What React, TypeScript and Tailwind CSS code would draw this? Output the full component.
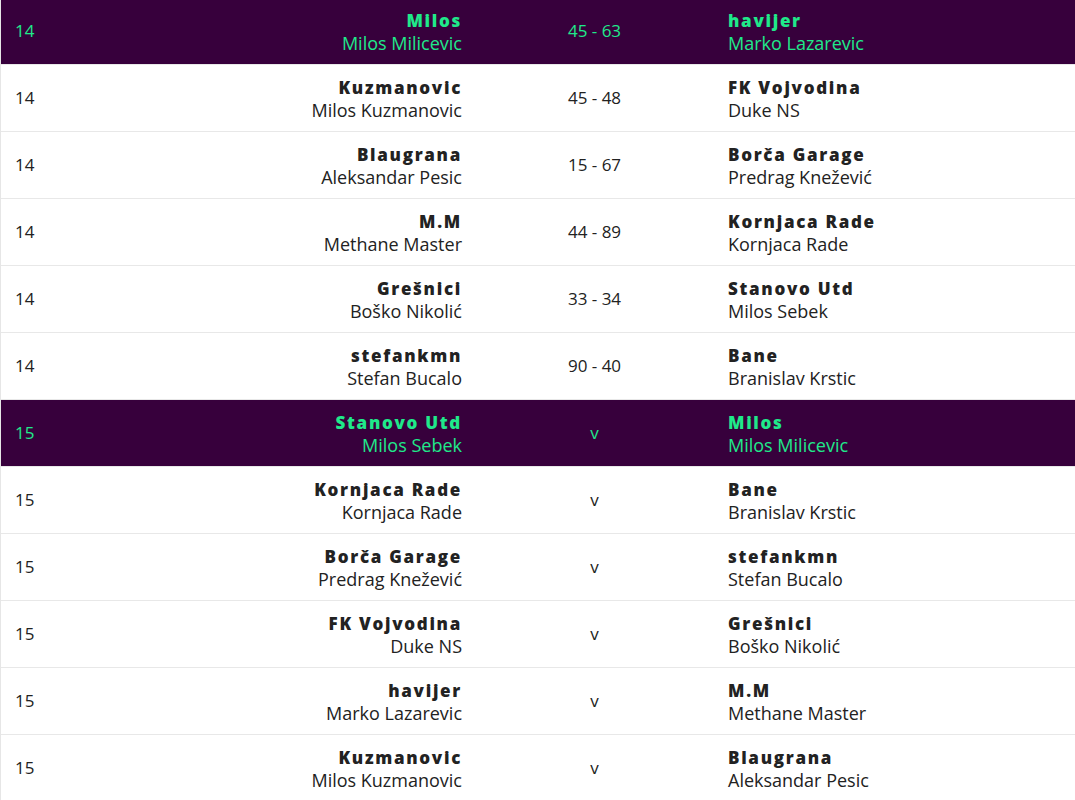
import React from 'react';

type Fixture = {
  gw: number;
  home: string;
  homeManager: string;
  away: string;
  awayManager: string;
  score?: string;
  highlight?: boolean;
};

const fixtures: Fixture[] = [
  { gw: 14, home: 'Milos', homeManager: 'Milos Milicevic', away: 'havijer', awayManager: 'Marko Lazarevic', score: '45 - 63', highlight: true },
  { gw: 14, home: 'Kuzmanovic', homeManager: 'Milos Kuzmanovic', away: 'FK Vojvodina', awayManager: 'Duke NS', score: '45 - 48' },
  { gw: 14, home: 'Blaugrana', homeManager: 'Aleksandar Pesic', away: 'Borča Garage', awayManager: 'Predrag Knežević', score: '15 - 67' },
  { gw: 14, home: 'M.M', homeManager: 'Methane Master', away: 'Kornjaca Rade', awayManager: 'Kornjaca Rade', score: '44 - 89' },
  { gw: 14, home: 'Grešnici', homeManager: 'Boško Nikolić', away: 'Stanovo Utd', awayManager: 'Milos Sebek', score: '33 - 34' },
  { gw: 14, home: 'stefankmn', homeManager: 'Stefan Bucalo', away: 'Bane', awayManager: 'Branislav Krstic', score: '90 - 40' },
  { gw: 15, home: 'Stanovo Utd', homeManager: 'Milos Sebek', away: 'Milos', awayManager: 'Milos Milicevic', highlight: true },
  { gw: 15, home: 'Kornjaca Rade', homeManager: 'Kornjaca Rade', away: 'Bane', awayManager: 'Branislav Krstic' },
  { gw: 15, home: 'Borča Garage', homeManager: 'Predrag Knežević', away: 'stefankmn', awayManager: 'Stefan Bucalo' },
  { gw: 15, home: 'FK Vojvodina', homeManager: 'Duke NS', away: 'Grešnici', awayManager: 'Boško Nikolić' },
  { gw: 15, home: 'havijer', homeManager: 'Marko Lazarevic', away: 'M.M', awayManager: 'Methane Master' },
  { gw: 15, home: 'Kuzmanovic', homeManager: 'Milos Kuzmanovic', away: 'Blaugrana', awayManager: 'Aleksandar Pesic' },
];

function Team({ name, manager, align }: { name: string; manager: string; align: 'left' | 'right' }) {
  return (
    <div className={'pt-[2px] ' + (align === 'right' ? 'text-right' : 'text-left')}>
      <div className="text-[17px] leading-[23px] font-extrabold tracking-[0.1em]">{name}</div>
      <div className="text-[18px] leading-[23px]">{manager}</div>
    </div>
  );
}

export default function App() {
  return (
    <div
      className="w-[1075px] h-[800px] overflow-hidden bg-white"
      style={{ fontFamily: '"Open Sans", "Noto Sans", sans-serif' }}
    >
      <div className="mt-[-2px] border-l border-[#e6e6e6]">
        {fixtures.map((f, i) => (
          <div
            key={i}
            className={
              'flex items-center h-[67px] border-b border-[#e8e8e8] ' +
              (f.highlight ? 'bg-[#37003c] text-[#1fe98a]' : 'bg-white text-[#222222]')
            }
          >
            <div className="w-[200px] pl-[14px] text-[17px]">{f.gw}</div>
            <div className="w-[261px] -mr-[1px]">
              <Team name={f.home} manager={f.homeManager} align="right" />
            </div>
            <div className="w-[267px] text-center text-[17px]">{f.score ?? 'v'}</div>
            <div className="flex-1">
              <Team name={f.away} manager={f.awayManager} align="left" />
            </div>
          </div>
        ))}
      </div>
    </div>
  );
}
